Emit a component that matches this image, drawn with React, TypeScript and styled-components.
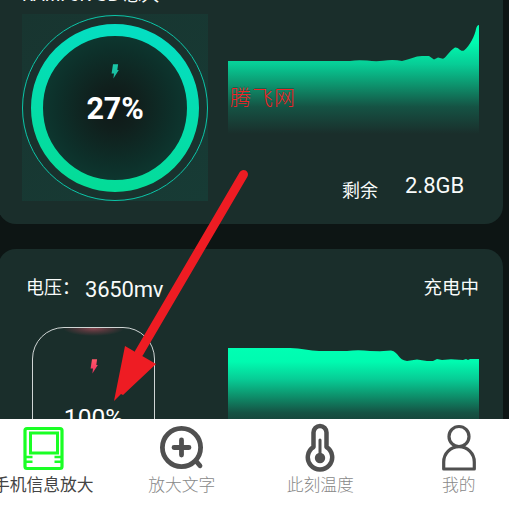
import React from "react";
import styled, { createGlobalStyle } from "styled-components";

const Global = createGlobalStyle`
  * { box-sizing: border-box; }
  html, body { margin: 0; overflow: hidden; background: #0d1514; }
  body { font-family: Roboto, "Noto Sans CJK SC", sans-serif; }
`;

const Screen = styled.div`
  position: relative;
  width: 509px;
  height: 505px;
  overflow: hidden;
  display: flex;
  flex-direction: column;
  background: #0d1514;
`;

const Content = styled.main`
  flex: 0 0 419px;
  overflow: hidden;
  display: flex;
  flex-direction: column;
  gap: 25px;
`;

const Card = styled.section<{ $first?: boolean }>`
  flex: none;
  width: 505px;
  margin-left: -2px;
  margin-top: ${(p) => (p.$first ? "-30px" : "0")};
  height: ${(p) => (p.$first ? "254px" : "250px")};
  padding: ${(p) => (p.$first ? "20px" : "24px")} 24px 0 24px;
  border-radius: 18px;
  background: #1a2e2b;
`;

const Heading = styled.header<{ $height: number }>`
  height: ${(p) => p.$height}px;
  display: flex;
  align-items: flex-start;
  color: #f4f8f7;
`;

const Label = styled.span<{ $size?: number; $left?: number; $top?: number; $track?: number }>`
  font-size: ${(p) => p.$size ?? 18}px;
  line-height: 28px;
  margin-left: ${(p) => p.$left ?? 0}px;
  margin-top: ${(p) => p.$top ?? 0}px;
  letter-spacing: ${(p) => p.$track ?? 0}px;
  color: #f8fbfa;
  white-space: nowrap;
`;

const Status = styled(Label)`
  margin-left: auto;
  margin-top: 1px;
  font-size: 18.5px;
`;

const Columns = styled.div`
  display: flex;
  align-items: flex-start;
`;

const Gauge = styled.div`
  width: 186px;
  height: 187px;
  display: grid;
  grid-template: 1fr / 1fr;
  background: linear-gradient(145deg, #183530, #173b35);
  > * { grid-area: 1 / 1; }
`;

const GaugeText = styled.div`
  display: flex;
  flex-direction: column;
  align-items: center;
  padding-top: 50px;
  strong {
    margin-top: 12px;
    font-size: 30.5px;
    line-height: 36px;
    color: #fff;
    letter-spacing: -0.1px;
  }
`;

const ChartColumn = styled.div<{ $left: number; $top: number }>`
  margin-left: ${(p) => p.$left}px;
  margin-top: ${(p) => p.$top}px;
  width: 251px;
`;

const Chart = styled.svg`
  display: block;
`;

const Remaining = styled.div`
  display: flex;
  padding-left: 114px;
`;

const Battery = styled.div`
  width: 123px;
  height: 170px;
  margin-left: 10px;
  border: 1px solid #cfd5d4;
  border-radius: 32px;
  display: flex;
  flex-direction: column;
  align-items: center;
  background: radial-gradient(ellipse 31px 8px at 50% 0, #884650 0%, rgba(112, 60, 68, 0.6) 50%, rgba(26, 46, 43, 0) 100%);
  padding-top: 31px;
  span {
    margin-top: 29px;
    font-size: 24.5px;
    line-height: 30px;
    color: #fff;
  }
`;

const TabBar = styled.nav`
  flex: 0 0 86px;
  width: 555px;
  margin-left: -26px;
  display: grid;
  grid-template-columns: repeat(4, 138.5px);
  background: #fff;
`;

const Tab = styled.div<{ $active?: boolean }>`
  display: flex;
  flex-direction: column;
  align-items: center;
  padding-top: 4px;
  color: ${(p) => (p.$active ? "#444" : "#888")};
  font-size: 16.8px;
  line-height: 24px;
  font-weight: ${(p) => (p.$active ? 400 : 300)};
  white-space: nowrap;
  svg { display: block; }
`;

const Watermark = styled.div`
  position: absolute;
  left: 230px;
  top: 80px;
  color: #ee2528;
  font: 300 21px/32px "Noto Sans CJK SC", sans-serif;
  letter-spacing: 1px;
  text-shadow: 1px -1px 0 rgba(15, 70, 55, 0.5);
`;

const Pointer = styled.svg`
  position: absolute;
  left: 100px;
  top: 160px;
`;

const Bolt = ({ from, to, id }: { from: string; to: string; id: string }) => (
  <svg width="8" height="15" viewBox="0 0 8 15">
    <defs>
      <linearGradient id={id} x2="0" y2="1">
        <stop stopColor={from} />
        <stop offset="1" stopColor={to} />
      </linearGradient>
    </defs>
    <path d="M2 .3H7.1L6.3 6H7.8L2.4 14.5 3 9.5H.6Z" fill={`url(#${id})`} />
  </svg>
);

const AreaGradient = ({ id, end }: { id: string; end: number }) => (
  <linearGradient id={id} gradientUnits="userSpaceOnUse" x1="0" y1="0" x2="0" y2={end}>
    <stop stopColor="#00ffb3" />
    <stop offset=".16" stopColor="#00fbb0" />
    <stop offset=".36" stopColor="#07cd96" />
    <stop offset=".54" stopColor="#0d966f" />
    <stop offset=".75" stopColor="#155344" />
    <stop offset="1" stopColor="#1a2e2b" />
  </linearGradient>
);

const MemoryGauge = () => (
  <Gauge>
    <svg width="186" height="187" viewBox="0 0 186 187">
      <defs>
        <linearGradient id="ring" x1=".6" y1="0" x2=".4" y2="1">
          <stop stopColor="#04dec2" />
          <stop offset="1" stopColor="#04dc98" />
        </linearGradient>
        <radialGradient id="dial">
          <stop stopColor="#101817" />
          <stop offset=".3" stopColor="#10201d" />
          <stop offset=".75" stopColor="#0d302a" />
          <stop offset="1" stopColor="#0d3931" />
        </radialGradient>
      </defs>
      <circle cx="93" cy="94" r="92.5" fill="#1a2e2b" fillOpacity=".65" stroke="#0cc5a8" />
      <circle cx="93" cy="94" r="78" fill="url(#dial)" stroke="url(#ring)" strokeWidth="12" />
    </svg>
    <GaugeText>
      <Bolt from="#19c8a8" to="#19bba0" id="mint" />
      <strong>27%</strong>
    </GaugeText>
  </Gauge>
);

const MemoryChart = () => (
  <Chart width="251" height="115" viewBox="0 0 251 115">
    <defs><AreaGradient id="memory" end={109} /></defs>
    <path fill="url(#memory)" d="M0 36H122Q130 34.5 139 35.6T155 35.8Q165 34 174 36C182 34.5 187 31 194 31H201L206 34.5 210 32.5 215 33.8C219 32 221 26 227 22.5C231 22 232 27 236 25.5C242 21 247 10 248 4Q249 0 251 0V115H0Z" />
  </Chart>
);

const VoltageChart = () => (
  <Chart width="251" height="105" viewBox="0 0 251 105">
    <defs><AreaGradient id="voltage" end={86} /></defs>
    <path fill="url(#voltage)" d="M0 0H62C73 0 82 3 91 3H119Q130 1.5 142 3L152 3.2 163 2.5C171 4 170 12 179 13L189 11.5 199 13 205 13 209 11 214 12 223 11.2 235 12 238 11 240 12 242 11H251V105H0Z" />
  </Chart>
);

const PhoneIcon = () => (
  <svg width="41" height="50" viewBox="0 0 41 50" fill="none" stroke="#1aff25">
    <rect x="2" y="5.5" width="37" height="40" rx="2" strokeWidth="3.2" />
    <rect x="7.5" y="10" width="27" height="20" strokeWidth="3" />
    <path d="M2 34H9.5M2 38.8H9.5M31.5 34H39M31.5 38.8H39" strokeWidth="2.4" />
  </svg>
);

const MagnifierIcon = () => (
  <svg width="44" height="50" viewBox="0 0 44 50" fill="none" stroke="#505050" strokeLinecap="round">
    <circle cx="21.5" cy="24.5" r="19.1" strokeWidth="4.8" />
    <path d="M21.5 17V32M14 24.5H29M36 38L40 42.8" strokeWidth="4.8" />
  </svg>
);

const ThermometerIcon = () => (
  <svg width="30" height="50" viewBox="0 0 30 50" fill="none" stroke="#505050">
    <path d="M8.5 24V9.5A6.5 6.5 0 0 1 21.5 9.5V24A12.2 12.2 0 1 1 8.5 24Z" strokeWidth="4.5" strokeLinejoin="round" />
    <path d="M15 17V35" strokeWidth="3" strokeLinecap="round" />
    <circle cx="15" cy="35" r="5.2" fill="#505050" stroke="none" />
  </svg>
);

const PersonIcon = () => (
  <svg width="36" height="50" viewBox="0 0 36 50" fill="none" stroke="#505050" strokeWidth="3.2">
    <circle cx="18" cy="13.5" r="10" />
    <path d="M2.7 46V39A15.3 15.3 0 0 1 33.3 39V46Z" strokeLinejoin="round" />
  </svg>
);

export default function App() {
  return (
    <>
      <Global />
      <Screen>
        <Content>
          <Card $first>
            <Heading $height={24}>
              <Label $left={0} $top={-9}>RAM: 6K GB 总大</Label>
            </Heading>
            <Columns>
              <MemoryGauge />
              <ChartColumn $left={20} $top={11}>
                <MemoryChart />
                <Remaining>
                  <Label $top={37}>剩余</Label>
                  <Label $size={22} $left={27} $top={32}>2.8GB</Label>
                </Remaining>
              </ChartColumn>
            </Columns>
          </Card>
          <Card>
            <Heading $height={54}>
              <Label $left={4} $top={1}>电压：</Label>
              <Label $size={22} $left={5} $top={3} $track={-0.2}>3650mv</Label>
              <Status>充电中</Status>
            </Heading>
            <Columns>
              <Battery>
                <Bolt from="#ff5968" to="#ee2f61" id="rose" />
                <span>100%</span>
              </Battery>
              <ChartColumn $left={73} $top={21}>
                <VoltageChart />
              </ChartColumn>
            </Columns>
          </Card>
        </Content>
        <TabBar>
          <Tab $active><PhoneIcon />手机信息放大</Tab>
          <Tab><MagnifierIcon />放大文字</Tab>
          <Tab><ThermometerIcon />此刻温度</Tab>
          <Tab><PersonIcon />我的</Tab>
        </TabBar>
        <Watermark>腾飞网</Watermark>
        <Pointer width="70" height="250" viewBox="0 0 70 250" overflow="visible">
          <path d="M143.5 14.5L39 193" stroke="#ee1c23" strokeWidth="9" strokeLinecap="round" />
          <path d="M25 186L56 204L23 235 21 234 14 241Z" fill="#ee1c23" />
        </Pointer>
      </Screen>
    </>
  );
}
